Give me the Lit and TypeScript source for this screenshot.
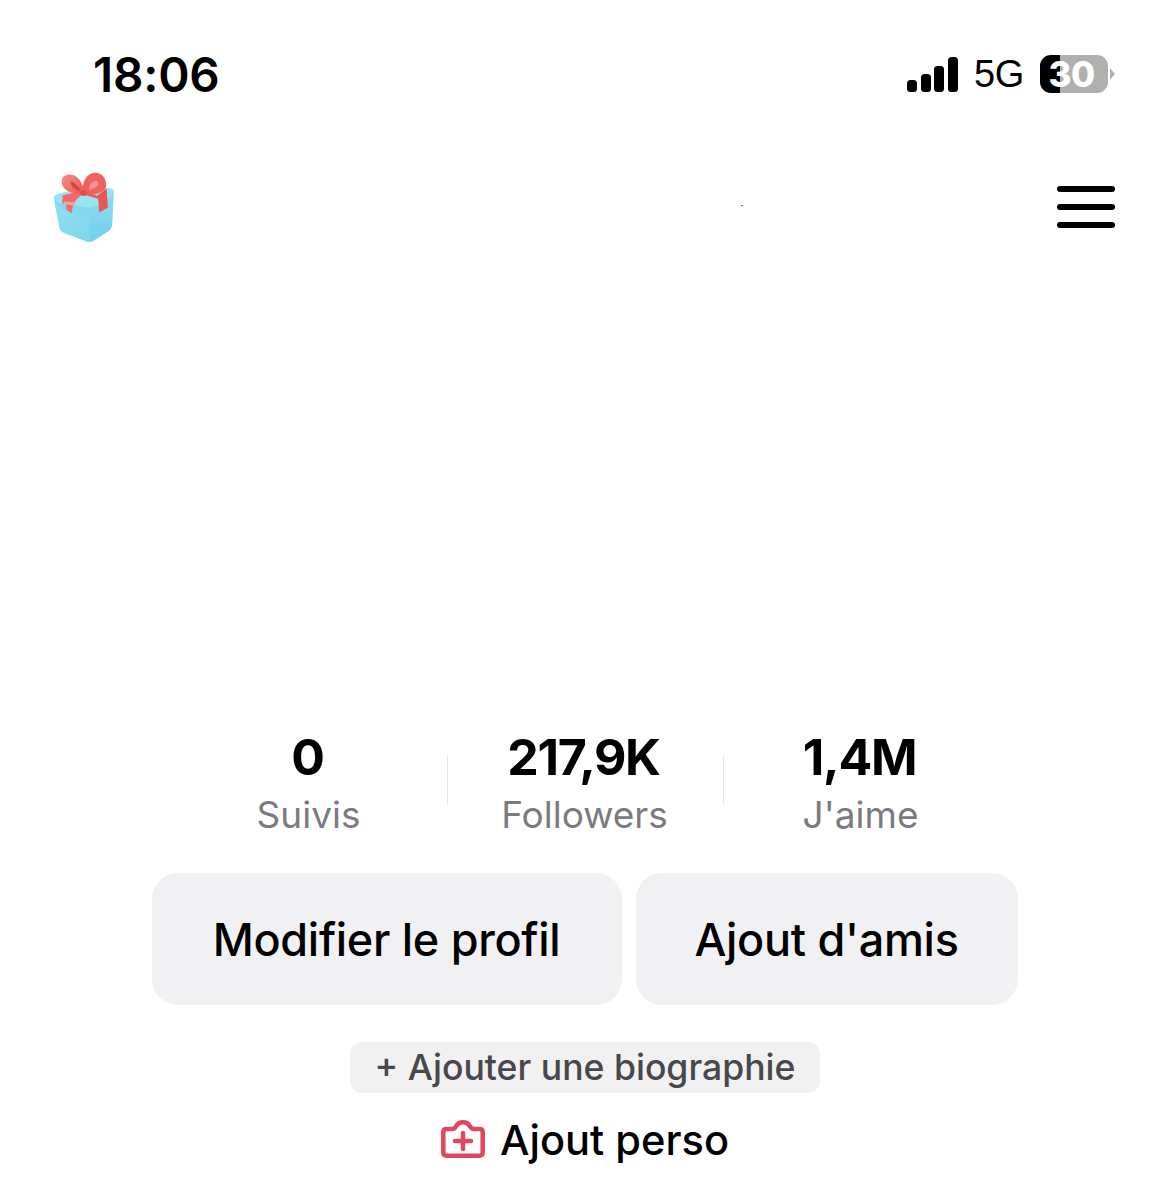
import { LitElement, html, css, svg } from "lit";
import { customElement } from "lit/decorators.js";

const gift = svg`
<svg class="gift" viewBox="68 36 186 214" aria-hidden="true">
  <defs>
    <linearGradient id="lf" x1="0" y1="0" x2="1" y2="1"><stop offset="0" stop-color="#8fdff2"/><stop offset="1" stop-color="#7fd6ed"/></linearGradient>
    <linearGradient id="rf" x1="0" y1="0" x2="0" y2="1"><stop offset="0" stop-color="#8edef1"/><stop offset="1" stop-color="#72cfe9"/></linearGradient>
    <linearGradient id="bw" x1="0" y1="0" x2="1" y2="1"><stop offset="0" stop-color="#f58f88"/><stop offset="1" stop-color="#ec5451"/></linearGradient>
  </defs>
  <path d="M70 116 Q70 108 80 104 L150 84 Q160 82 172 83 L240 86 Q252 88 251 100 L246 196 Q245 208 236 214 L190 243 Q180 249 168 245 L98 218 Q88 213 87 202 Z" fill="url(#rf)"/>
  <path d="M74 134 Q120 165 176 168 L180 247 Q173 248 168 245 L98 218 Q88 213 87 202 Z" fill="url(#lf)"/>
  <path d="M70 116 Q70 108 80 104 L150 84 Q160 82 172 83 L240 86 Q252 88 251 100 Q230 126 192 140 Q180 144 166 142 L88 130 Q72 126 70 116 Z" fill="#98e3f4"/>
  <path d="M97 106 L150 94 L152 106 L136 122 L128 132 L124 160 L108 150 L108 134 L95 130 Z" fill="#ef6b69"/>
  <path d="M100 124 L134 128 L133 137 L100 133 Z" fill="#f9a19c"/>
  <path d="M150 100 L172 98 L214 112 L206 118 Z" fill="#ee5c5a"/>
  <path d="M203 106 L229 86 L233 144 L207 157 Z" fill="#ea5653"/>
  <path d="M164 104 C130 102 92 94 94 62 C95 46 114 40 130 46 C150 54 160 78 164 104 Z" fill="url(#bw)"/>
  <path d="M121 64 C134 68 146 82 151 93 C136 90 118 80 121 64 Z" fill="#cf4644"/>
  <path d="M156 104 C156 76 160 46 188 39 C210 34 228 52 228 74 C230 96 196 108 156 104 Z" fill="#f0625f"/>
  <path d="M176 84 C180 66 192 60 202 63 C208 72 202 84 178 91 Z" fill="#f69490"/>
  <ellipse cx="160" cy="99" rx="11" ry="9" fill="#e84a48"/>
</svg>`;

@customElement("app-root")
export class AppRoot extends LitElement {
  static styles = css`
    :host { display: block; height: 1200px; background: #fff; color: #000; font-family: Inter, "Liberation Sans", sans-serif; overflow: hidden; position: relative; }
    .status { display: flex; justify-content: space-between; align-items: center; height: 54px; margin-top: 48px; padding: 0 55px 0 93px; }
    .time { font-size: 47.600px; font-weight: 600; letter-spacing: -0.2px; line-height: 54px; }
    .sys { display: flex; align-items: center; margin-bottom: 2px; }
    .signal { width: 52px; height: 36px; display: block; margin-right: 16px; }
    .net { font-size: 38px; font-weight: 400; letter-spacing: -0.3px; line-height: 40px; margin-right: 16px; font-family: "Liberation Sans", sans-serif; }
    .batt { width: 68px; height: 38px; border-radius: 11px; padding-right: 5px; box-sizing: border-box; background: linear-gradient(90deg, #000 0 20px, #b0b0b0 20px); color: #fff; display: flex; align-items: center; justify-content: center; font-size: 35px; font-weight: 800; line-height: 38px; letter-spacing: -0.5px; }
    .cap { width: 0; height: 0; border-left: 5px solid #b0b0b0; border-top: 6px solid transparent; border-bottom: 6px solid transparent; margin-left: 2px; }
    .head { display: flex; justify-content: space-between; align-items: center; height: 72px; margin-top: 69px; padding: 0 55px 0 53px; position: relative; }
    .gift { width: 62px; height: 71px; display: block; }
    .burger { width: 58px; height: 42px; display: flex; flex-direction: column; justify-content: space-between; }
    .burger i { display: block; height: 6px; border-radius: 3px; background: #000; }
    .speck { position: absolute; left: 741px; top: 34px; width: 2px; height: 1px; background: #777; }
    .stats { display: flex; justify-content: center; margin-top: 485px; padding-right: 3px; }
    .stat { width: 276px; display: flex; flex-direction: column; align-items: center; position: relative; }
    .stat + .stat::before { content: ""; position: absolute; left: 1px; top: 28px; width: 1px; height: 48px; background: #e6e6e8; }
    .num { font-size: 50px; font-weight: 700; line-height: 58px; letter-spacing: -1.3px; }
    .lbl { font-size: 37px; line-height: 44px; color: #7b7b7f; font-weight: 400; margin-top: 7px; padding-left: 2px; }
    .btns { display: flex; gap: 14px; justify-content: center; margin-top: 36px; padding-right: 1px; }
    .btn { height: 132px; border-radius: 26px; background: #f1f1f3; display: flex; align-items: center; justify-content: center; font-size: 45px; font-weight: 500; letter-spacing: -0.3px; }
    .b1 { width: 470px; }
    .b2 { width: 382px; }
    .bio { display: flex; justify-content: center; margin-top: 37px; }
    .pill { width: 470px; height: 51px; border-radius: 12px; background: #f1f1f2; color: #48484b; display: flex; align-items: center; justify-content: center; font-size: 35.6px; font-weight: 500; line-height: 51px; }
    .perso { display: flex; justify-content: center; align-items: center; gap: 15px; margin-top: 22px; height: 50px; font-size: 41.6px; font-weight: 500; }
    .cam { width: 44px; height: 38px; display: block; margin-top: -2px; }
  `;

  render() {
    return html`
      <div class="status">
        <div class="time">18:06</div>
        <div class="sys">
          <svg class="signal" viewBox="0 0 52 36" aria-hidden="true">
            <rect x="1" y="24" width="10" height="12" rx="3.5"/>
            <rect x="15" y="18" width="10" height="18" rx="3.5"/>
            <rect x="28" y="10" width="10" height="26" rx="3.5"/>
            <rect x="42" y="1" width="10" height="35" rx="3.5"/>
          </svg>
          <span class="net">5G</span>
          <div class="batt">30</div>
          <div class="cap"></div>
        </div>
      </div>
      <div class="head">
        ${gift}
        <span class="speck"></span>
        <div class="burger"><i></i><i></i><i></i></div>
      </div>
      <div class="stats">
        <div class="stat"><div class="num">0</div><div class="lbl">Suivis</div></div>
        <div class="stat"><div class="num">217,9K</div><div class="lbl">Followers</div></div>
        <div class="stat"><div class="num">1,4M</div><div class="lbl">J'aime</div></div>
      </div>
      <div class="btns">
        <div class="btn b1">Modifier le profil</div>
        <div class="btn b2">Ajout d'amis</div>
      </div>
      <div class="bio"><div class="pill">+ Ajouter une biographie</div></div>
      <div class="perso">
        <svg class="cam" viewBox="0 0 44 38" fill="none" stroke="#e3465f" stroke-width="4.500" stroke-linejoin="round" stroke-linecap="round" aria-hidden="true">
          <path d="M5.500 9 H11 C13 9 14 8 15 6.500 C16.500 3.500 19 2.300 22 2.300 C25 2.300 27.500 3.500 29 6.500 C30 8 31 9 33 9 H38.500 C40.700 9 41.700 10 41.700 12 V32.500 C41.700 34.700 40.700 35.700 38.500 35.700 H5.500 C3.300 35.700 2.300 34.700 2.300 32.500 V12 C2.300 10 3.300 9 5.500 9 Z"/>
          <path d="M14 21 H30 M22 13 V29"/>
        </svg>
        <span>Ajout perso</span>
      </div>
    `;
  }
}
